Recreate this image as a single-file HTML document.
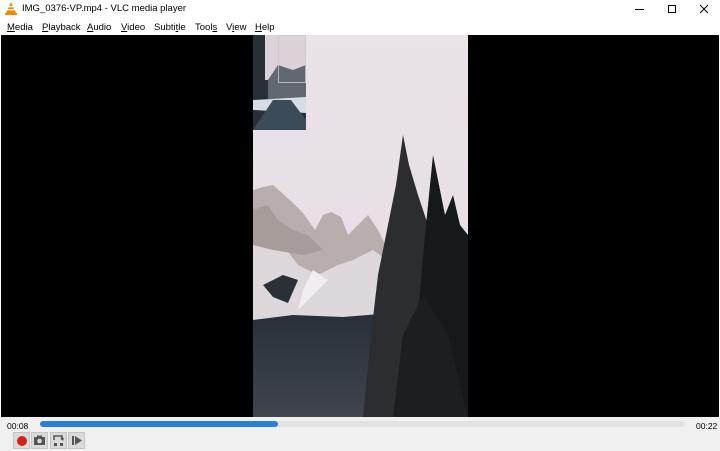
<!DOCTYPE html>
<html><head><meta charset="utf-8"><style>
*{margin:0;padding:0;box-sizing:border-box}
body{width:720px;height:451px;overflow:hidden;background:#fff;font-family:"Liberation Sans",sans-serif;font-size:9px;color:#000;position:relative}
.t{position:absolute;left:22px;top:3px;font-size:9.5px}
.m{position:absolute;top:22px;font-size:9.5px}
.m u{text-decoration:underline}
#vid{position:absolute;left:1px;top:35px;width:718px;height:382px;background:#000}
#ctl{position:absolute;left:0;top:417px;width:720px;height:34px;background:#f0f0f0}
.btn{position:absolute;top:15px;width:17px;height:17px;background:#dadada;border:1px solid #c4c4c4}
</style></head><body>
<svg style="position:absolute;left:5px;top:2px" width="12" height="13" viewBox="0 0 12 13"><path d="M6 0 L11 11 L1 11 Z" fill="#f08a00"/><rect x="3" y="4" width="6" height="1.3" fill="#fff"/><rect x="2.3" y="7" width="7.4" height="1.3" fill="#fff"/><rect x="0" y="11" width="12" height="2" fill="#f08a00"/></svg>
<div class="t">IMG_0376-VP.mp4 - VLC media player</div>
<svg style="position:absolute;left:630px;top:3px" width="85" height="12"><line x1="5" y1="6.5" x2="14" y2="6.5" stroke="#000"/><rect x="38.5" y="2.5" width="7" height="7" fill="none" stroke="#000"/><path d="M70 2 L78 10 M78 2 L70 10" stroke="#000"/></svg>
<div class="m" style="left:7px"><u>M</u>edia</div>
<div class="m" style="left:42px"><u>P</u>layback</div>
<div class="m" style="left:87px"><u>A</u>udio</div>
<div class="m" style="left:121px"><u>V</u>ideo</div>
<div class="m" style="left:154px">Subti<u>t</u>le</div>
<div class="m" style="left:195px">Tool<u>s</u></div>
<div class="m" style="left:226px">V<u>i</u>ew</div>
<div class="m" style="left:255px"><u>H</u>elp</div>
<div id="vid">
<svg style="position:absolute;left:252px;top:0" width="215" height="382" viewBox="0 0 215 382">
<defs><linearGradient id="sky" x1="0" y1="0" x2="0" y2="1"><stop offset="0" stop-color="#ebe3ea"/><stop offset="1" stop-color="#e4dce2"/></linearGradient>
<linearGradient id="for" x1="0" y1="0" x2="0" y2="1"><stop offset="0" stop-color="#27303a"/><stop offset="1" stop-color="#40444c"/></linearGradient></defs>
<rect width="215" height="382" fill="url(#sky)"/>
<path d="M0 155 L10 152 L20 150 L28 157 L40 168 L50 178 L62 195 L70 180 L78 177 L88 182 L95 200 L105 190 L115 180 L125 195 L135 215 L140 300 L0 300 Z" fill="#b9aeae"/>
<path d="M0 190 L15 200 L30 210 L45 230 L65 240 L85 230 L100 225 L120 215 L140 230 L140 300 L0 300 Z" fill="#dcd8dc"/>
<path d="M0 175 L15 170 L25 185 L40 195 L55 200 L70 215 L50 220 L20 215 L0 210Z" fill="#a89c9a"/>
<path d="M10 250 L30 240 L45 245 L35 268 L20 262 Z" fill="#2a3038"/>
<path d="M60 235 L75 245 L45 275 L50 255Z" fill="#f0eef2"/>
<path d="M0 285 L40 280 L90 282 L140 278 L140 382 L0 382 Z" fill="url(#for)"/>
<path d="M150 100 L156 130 L165 160 L175 190 L185 240 L190 300 L200 382 L110 382 L118 300 L125 240 L135 190 L143 150 Z" fill="#2b2d31"/>
<path d="M180 120 L186 150 L192 180 L200 160 L207 190 L215 200 L215 382 L160 382 L165 280 L172 200 Z" fill="#16191c"/>
<path d="M140 382 L150 300 L170 260 L195 300 L215 382Z" fill="#1c1f22"/>
<rect x="0" y="0" width="53" height="95" fill="#273036"/>
<rect x="12" y="0" width="41" height="45" fill="#dcd2da"/>
<path d="M15 45 L25 30 L40 35 L53 30 L53 70 L15 70 Z" fill="#606870"/>
<path d="M0 65 L53 62 L53 78 L0 75 Z" fill="#d8dce4"/>
<path d="M0 95 L20 65 L38 65 L53 85 L53 95 Z" fill="#3b4c58"/>
<rect x="25.5" y="0.5" width="27" height="47" fill="none" stroke="#cfc8ce" stroke-width="0.8"/>
</svg>
</div>
<div id="ctl">
<div style="position:absolute;left:7px;top:4px;font-size:8.5px">00:08</div>
<div style="position:absolute;left:40px;top:4px;width:645px;height:6px;background:#e2e2e2;border-radius:3px"></div>
<div style="position:absolute;left:40px;top:4px;width:238px;height:6px;background:#2b80d6;border-radius:3px"></div>
<div style="position:absolute;left:696px;top:4px;font-size:8.5px">00:22</div>
<div class="btn" style="left:13px"><div style="position:absolute;left:3px;top:3px;width:10px;height:10px;border-radius:50%;background:#d0231c"></div></div>
<div class="btn" style="left:31px"><svg width="15" height="15"><rect x="2" y="4" width="11" height="8" fill="#555"/><rect x="5" y="2.5" width="5" height="2" fill="#555"/><circle cx="7.5" cy="8" r="2.3" fill="#dadada"/></svg></div>
<div class="btn" style="left:50px"><svg width="15" height="15"><path d="M3 7 V3 H11 V7" fill="none" stroke="#555" stroke-width="1.6"/><path d="M9 5 L12 8 L13 5Z" fill="#555"/><rect x="3" y="10" width="3" height="3" fill="#555"/><rect x="9" y="10" width="3" height="3" fill="#555"/></svg></div>
<div class="btn" style="left:68px"><svg width="15" height="15"><rect x="3" y="3" width="2" height="9" fill="#555"/><path d="M6 3 L13 7.5 L6 12Z" fill="#555"/></svg></div>
</div>
</body></html>
